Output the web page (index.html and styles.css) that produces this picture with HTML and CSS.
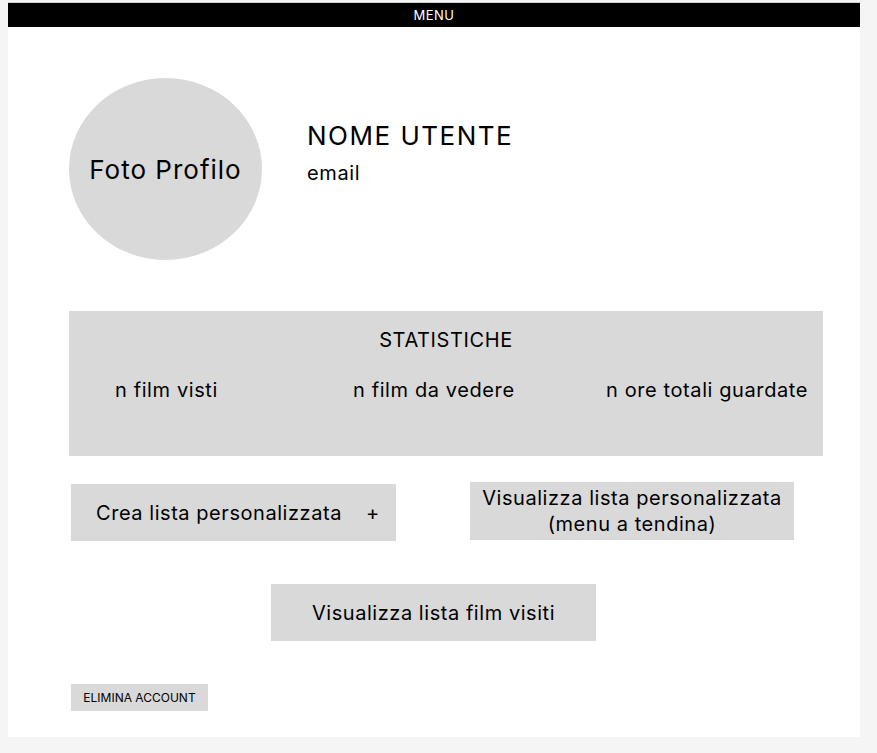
FILE: index.html
```html
<!DOCTYPE html>
<html lang="it">
<head>
    <meta charset="UTF-8">
    <meta name="viewport" content="width=device-width, initial-scale=1.0">
    <title>Profilo utente</title>
    <link rel="stylesheet" href="styles.css">
</head>
<body>
    <div class="frame">
        <div class="menu-bar">MENU</div>

        <div class="profile">
            <div class="avatar">Foto Profilo</div>
            <div class="user-info">
                <div class="user-name">NOME UTENTE</div>
                <div class="user-email">email</div>
            </div>
        </div>

        <div class="stats">
            <div class="stats-title">STATISTICHE</div>
            <div class="stats-row">
                <span>n film visti</span>
                <span>n film da vedere</span>
                <span>n ore totali guardate</span>
            </div>
        </div>

        <div class="list-row">
            <div class="btn btn-create">
                <span>Crea lista personalizzata</span>
                <span class="plus">+</span>
            </div>
            <div class="btn btn-view">Visualizza lista personalizzata<br>(menu a tendina)</div>
        </div>

        <div class="watched-row">
            <div class="btn">Visualizza lista film visiti</div>
        </div>

        <div class="btn btn-delete">ELIMINA ACCOUNT</div>
    </div>
</body>
</html>
```

FILE: styles.css
```css
body {
    margin: 0;
    background: #f5f5f5;
    font-family: Inter, "Noto Sans", sans-serif;
    color: #000;
}
.frame {
    width: 852px;
    margin: 2px 0 0 8px;
    padding-bottom: 26px;
    background: #fff;
    border-top: 1px solid #d0d0d0;
}
.menu-bar {
    height: 24px;
    line-height: 24px;
    background: #000;
    color: #fff;
    font-size: 13px;
    letter-spacing: 0.5px;
    text-align: center;
}
.profile {
    display: flex;
    align-items: flex-start;
    margin-top: 51px;
    padding-left: 61px;
    gap: 45px;
}
.avatar {
    width: 193px;
    height: 182px;
    border-radius: 50%;
    background: #d9d9d9;
    display: flex;
    align-items: center;
    justify-content: center;
    font-size: 26px;
    letter-spacing: 1px;
}
.user-info {
    margin-top: 42px;
}
.user-name {
    font-size: 26px;
    letter-spacing: 1.5px;
}
.user-email {
    margin-top: 10px;
    font-size: 20px;
    letter-spacing: 0.6px;
}
.stats {
    width: 754px;
    height: 145px;
    box-sizing: border-box;
    margin: 51px 0 0 61px;
    padding-top: 17px;
    background: #d9d9d9;
    font-size: 20px;
    letter-spacing: 0.6px;
}
.stats-title {
    text-align: center;
}
.stats-row {
    display: grid;
    grid-template-columns: 238px 253px auto;
    margin-top: 26px;
    padding-left: 46px;
}
.btn {
    background: #d9d9d9;
    font-size: 20px;
    letter-spacing: 0.55px;
    display: flex;
    align-items: center;
    justify-content: center;
    text-align: center;
    line-height: 26px;
}
.list-row {
    display: flex;
    align-items: flex-start;
    gap: 74px;
    margin-top: 26px;
    padding-left: 63px;
}
.btn-create {
    width: 325px;
    height: 57px;
    margin-top: 2px;
    justify-content: flex-start;
    padding-left: 25px;
    box-sizing: border-box;
}
.plus {
    margin-left: 24px;
}
.btn-view {
    width: 324px;
    height: 58px;
}
.watched-row {
    display: flex;
    justify-content: center;
    margin-top: 43px;
    padding-right: 1px;
}
.watched-row .btn {
    width: 325px;
    height: 57px;
}
.btn-delete {
    width: 137px;
    height: 27px;
    margin: 43px 0 0 63px;
    font-size: 12px;
    letter-spacing: 0;
}
```
